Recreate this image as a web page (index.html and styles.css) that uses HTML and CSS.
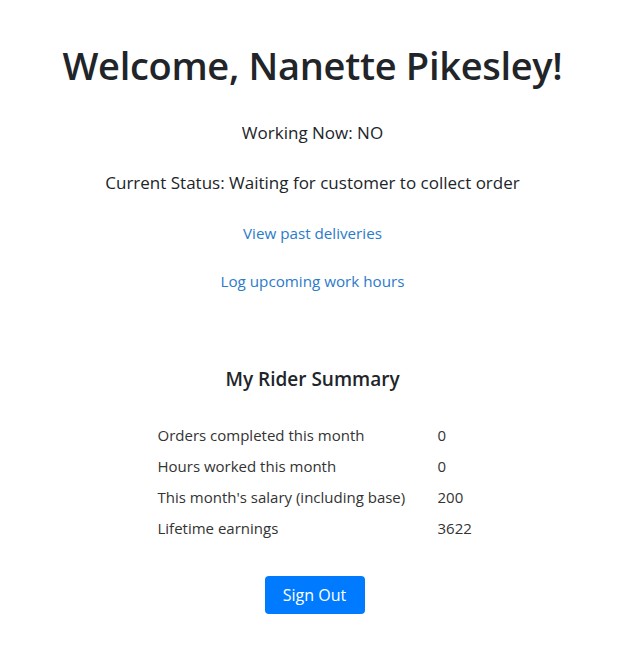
FILE: index.html
```html
<!DOCTYPE html>
<html lang="en">
<head>
<meta charset="utf-8">
<title>Rider Home</title>
<link rel="stylesheet" href="styles.css">
</head>
<body>
<main class="page">
  <h1 class="welcome">Welcome, Nanette Pikesley!</h1>
  <div class="info">
    <p class="line">Working Now: NO</p>
    <p class="line">Current Status: Waiting for customer to collect order</p>
    <a class="link" href="#">View past deliveries</a>
    <a class="link" href="#">Log upcoming work hours</a>
  </div>
  <section class="summary">
    <h2 class="summary-title">My Rider Summary</h2>
    <div class="stats">
      <span class="stat-label">Orders completed this month</span><span class="stat-value">0</span>
      <span class="stat-label">Hours worked this month</span><span class="stat-value">0</span>
      <span class="stat-label">This month's salary (including base)</span><span class="stat-value">200</span>
      <span class="stat-label">Lifetime earnings</span><span class="stat-value">3622</span>
    </div>
    <button class="btn" type="button">Sign Out</button>
  </section>
</main>
</body>
</html>
```
FILE: styles.css
```css
html, body {
  margin: 0;
  padding: 0;
  background: #ffffff;
}
body {
  font-family: "Open Sans", "Noto Sans", sans-serif;
  color: #212529;
  font-size: 16px;
  line-height: 24px;
}
.page {
  display: flex;
  flex-direction: column;
  align-items: center;
  padding-top: 39px;
}
.welcome {
  margin: 0;
  font-size: 38px;
  letter-spacing: -0.3px;
  line-height: 52px;
  font-weight: 600;
  color: #212529;
}
.info {
  display: flex;
  flex-direction: column;
  align-items: center;
  gap: 26px;
  margin-top: 30px;
}
.line {
  margin: 0;
  font-size: 17px;
}
.link {
  color: #2b7bca;
  text-decoration: none;
  font-size: 15.2px;
}
.link:last-child {
  margin-top: -2px;
}
.summary {
  display: flex;
  flex-direction: column;
  align-items: center;
  margin-top: 72px;
}
.summary-title {
  margin: 0;
  font-size: 19px;
  line-height: 28px;
  font-weight: 600;
}
.stats {
  display: grid;
  grid-template-columns: 280px 34px;
  row-gap: 7px;
  margin-top: 30px;
  padding-left: 4px;
  font-size: 15px;
  color: #333;
}
.btn {
  margin-top: 36px;
  margin-left: 4px;
  background: #007bff;
  color: #fff;
  border: none;
  border-radius: 4px;
  width: 100px;
  height: 38px;
  font-family: inherit;
  font-size: 16px;
  cursor: pointer;
}
```
